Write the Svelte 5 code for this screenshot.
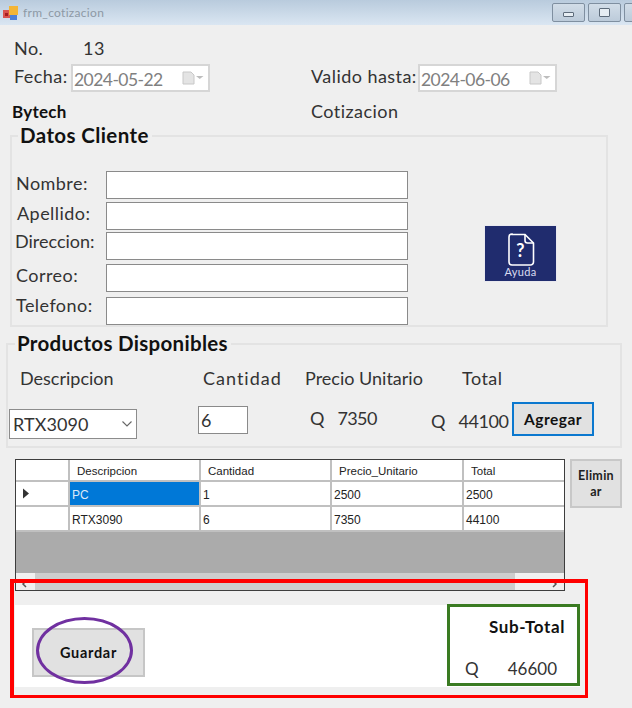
<script>
  const fields = ['Nombre:', 'Apellido:', 'Direccion:', 'Correo:', 'Telefono:'];
  const rows = [
    { desc: 'PC', qty: '1', price: '2500', total: '2500', current: true },
    { desc: 'RTX3090', qty: '6', price: '7350', total: '44100', current: false }
  ];
</script>

{#snippet datebox(value)}
  <div class="date">
    <span>{value}</span>
    <svg width="22" height="14" viewBox="0 0 22 14">
      <path d="M1 1h8l3 3v9H1z" fill="#e4e4e4" stroke="#c8c8c8"/>
      <path d="M14 5h7.500l-3.750 3z" fill="#bdbdbd"/>
    </svg>
  </div>
{/snippet}

<div class="form">
  <header class="title">
    <svg class="appicon" width="16" height="16" viewBox="0 0 16 16">
      <rect x="0" y="5" width="7" height="8" fill="#d9534f"/>
      <rect x="2" y="8" width="3" height="3" fill="#a51f1f"/>
      <rect x="6" y="1" width="9" height="9" fill="#f4b536"/>
      <rect x="7" y="10" width="7" height="5" fill="#4f7fd6"/>
    </svg>
    <span class="caption">frm_cotizacion</span>
    <div class="winbtns">
      <div class="winbtn"><i class="min"></i></div>
      <div class="winbtn"><i class="max"></i></div>
      <div class="winbtn cut"></div>
    </div>
  </header>

  <section class="meta">
    <span>No.</span><span class="num">13</span><span></span><span></span>
    <span class="lift">Fecha:</span>{@render datebox('2024-05-22')}<span class="valido lift">Valido hasta:</span>{@render datebox('2024-06-06')}
    <b class="bytech">Bytech</b><span></span><span class="coti">Cotizacion</span><span></span>
  </section>

  <section class="group cliente">
    <h2>Datos Cliente</h2>
    <div class="fields">
      {#each fields as f}
        <div class="field"><label for={f}>{f}</label><input id={f} /></div>
      {/each}
    </div>
    <button class="ayuda">
      <svg width="28" height="34" viewBox="0 0 28 34" fill="none" stroke="#fff" stroke-width="1.6">
        <path d="M5 1.5h13l8.500 8.500v19a3 3 0 0 1-3 3H5a3 3 0 0 1-3-3v-25a3 3 0 0 1 3-3z"/>
        <path d="M18 1.500v6a2.500 2.500 0 0 0 2.500 2.500h6"/>
      </svg>
      <span class="q">?</span>
      <span class="ay">Ayuda</span>
    </button>
  </section>

  <section class="group productos">
    <h2>Productos Disponibles</h2>
    <div class="heads">
      <span class="h1">Descripcion</span><span class="h2c">Cantidad</span><span class="h3">Precio Unitario</span><span>Total</span>
    </div>
    <div class="entry">
      <div class="combo"><span>RTX3090</span>
        <svg width="12" height="8" viewBox="0 0 12 8" fill="none" stroke="#666" stroke-width="1.1"><path d="M1.500 1.500 6 6l4.500-4.500"/></svg>
      </div>
      <div class="qty">6</div>
      <div class="money price"><span>Q</span><span>7350</span></div>
      <div class="money amount"><span>Q</span><span>44100</span></div>
      <button class="agregar">Agregar</button>
    </div>
  </section>

  <section class="gridrow">
    <div class="table">
      <div class="tr head">
        <div class="rh"></div><div class="td">Descripcion</div><div class="td">Cantidad</div><div class="td">Precio_Unitario</div><div class="td">Total</div>
      </div>
      {#each rows as r}
        <div class="tr">
          <div class="rh">{#if r.current}<svg width="8" height="11" viewBox="0 0 8 11"><path d="M1 0.500 7 5.500 1 10.500z" fill="#333"/></svg>{/if}</div>
          <div class="td" class:sel={r.current}>{r.desc}</div>
          <div class="td">{r.qty}</div><div class="td">{r.price}</div><div class="td">{r.total}</div>
        </div>
      {/each}
      <div class="empty"></div>
      <div class="scroll">
        <svg width="19" height="17" viewBox="0 0 19 17" fill="none" stroke="#555" stroke-width="1.500"><path d="M10 8 7 11l3 3"/></svg>
        <div class="track"><div class="thumb"></div></div>
        <svg width="19" height="17" viewBox="0 0 19 17" fill="none" stroke="#555" stroke-width="1.500"><path d="M8 8l3 3-3 3"/></svg>
      </div>
    </div>
    <button class="eliminar">Elimin<br />ar</button>
  </section>

  <section class="bottom">
    <button class="guardar">Guardar</button>
    <div class="sub">
      <b>Sub-Total</b>
      <div class="subval"><span>Q</span><span>46600</span></div>
    </div>
  </section>

  <div class="mark red"></div>
  <div class="mark green"></div>
  <div class="mark purple"></div>
</div>

<style>
  :global(body) { margin: 0; }
  .form {
    position: relative; width: 632px; height: 708px; overflow: hidden;
    background: #efefef; color: #333;
    font-family: "Lato", "Open Sans", sans-serif; font-size: 18px; letter-spacing: 0.45px;
  }
  button { font-family: inherit; padding: 0; }
  .title {
    height: 25px; display: flex; align-items: center; padding-left: 3px; box-sizing: border-box;
    background: linear-gradient(#b9cbdd, #dae6f2);
  }
  .appicon { flex: none; }
  .caption { margin-left: 4px; font-size: 12px; color: #8d99a5; letter-spacing: 0.3px; }
  .winbtns { margin-left: auto; display: flex; gap: 3px; align-self: flex-start; padding-top: 3px; margin-right: -6px; }
  .winbtn {
    width: 33px; height: 19px; box-sizing: border-box; border: 1px solid #7f8fa0; border-radius: 2px;
    background: linear-gradient(#d2dde8, #bccbda); display: flex; align-items: center; justify-content: center;
  }
  .winbtn.cut { width: 14px; }
  .winbtn i { display: block; border: 1px solid #5d6b7a; background: #e6edf3; box-sizing: border-box; }
  .min { width: 11px; height: 5px; margin-top: 3px; border-radius: 1px; }
  .max { width: 11px; height: 9px; border-radius: 1px; }

  .meta {
    display: grid; grid-template-columns: 57px 240px 107px 140px; grid-template-rows: 24px 28px 30px;
    row-gap: 4px; align-items: center; padding: 11px 0 0 14px; height: 98px; box-sizing: border-box;
    margin-bottom: 12px;
  }
  .num { margin-left: 12px; }
  .lift { margin-top: -4px; }
  .valido { white-space: nowrap; }
  .bytech { font-size: 17px; margin-left: -2px; color: #111; letter-spacing: 0.25px; }
  .coti { white-space: nowrap; }
  .date {
    width: 139px; height: 28px; box-sizing: border-box; border: 2px solid #d6d6d6; background: #fff; color: #808080;
    font-size: 17.500px; letter-spacing: -0.55px;
    display: flex; align-items: center; padding: 2px 4px 0 1px;
  }
  .date svg { margin-left: auto; margin-top: -2px; }

  .group { position: relative; box-sizing: border-box; border: 2px solid #e3e3e3; }
  .group h2 {
    position: absolute; margin: 0; background: #efefef; padding: 0 3px 0 2px; line-height: 24px;
    font-size: 20.500px; font-weight: 700; color: #111; white-space: nowrap; letter-spacing: 0.4px;
  }
  .cliente {
    margin-left: 10px; width: 598px; height: 192px; padding: 34px 0 0 4px;
    display: flex;
  }
  .cliente h2 { left: 6px; top: -14px; }
  .fields { display: flex; flex-direction: column; }
  .field { display: flex; align-items: center; height: 28px; }
  .field:nth-child(2) { margin-top: 3px; }
  .field:nth-child(3) { margin-top: 2px; }
  .field:nth-child(4) { margin-top: 4px; }
  .field:nth-child(5) { margin-top: 5px; }
  .field label { width: 90px; flex: none; }
  .field:nth-child(1) label { transform: translateY(-2px); }
  .field:nth-child(2) label { transform: translate(1px, -3px); }
  .field:nth-child(3) label { transform: translate(-1px, -5px); letter-spacing: 0; }
  .field:nth-child(4) label { transform: translateY(-3px); }
  .field:nth-child(5) label { transform: translateY(-6px); }
  .field input {
    width: 302px; height: 28px; box-sizing: border-box; border: 1px solid #8a8a8a; background: #fff; padding: 0; outline: 0;
  }
  .ayuda {
    position: relative; align-self: flex-start; margin: 54px 0 0 76px; width: 73px; height: 57px;
    border: 1px solid #e9e9ef; background: #202c6e; color: #fff; display: flex; flex-direction: column; align-items: center;
    padding-top: 7px; box-sizing: border-box;
  }
  .q { position: absolute; top: 14px; left: 0; right: 0; text-align: center; font-size: 18px; font-weight: 700; color: #fff; letter-spacing: 0; line-height: 20px; }
  .ay { position: absolute; bottom: 3px; left: 0; right: 0; text-align: center; font-size: 11px; color: #d9dcf0; line-height: 12px; letter-spacing: 0.3px; }

  .productos { margin: 16px 0 0 6px; width: 616px; height: 105px; padding: 21px 0 0 0; }
  .productos h2 { left: 7px; top: -14px; letter-spacing: 0.3px; }
  .heads { display: grid; grid-template-columns: 183px 102px 157px auto; padding-left: 12px; height: 24px; line-height: 24px; white-space: nowrap; }
  .h1, .h3 { letter-spacing: 0; }
  .h2c { letter-spacing: 1px; }
  .entry { position: relative; height: 40px; margin-top: 13px; display: flex; align-items: flex-start; }
  .combo {
    margin: 6px 0 0 1px; width: 128px; height: 30px; box-sizing: border-box; border: 1px solid #8c8c8c; background: #fff;
    display: flex; align-items: center; justify-content: space-between; padding: 0 3px 0 3px; letter-spacing: 0.1px;
  }
  .qty {
    margin: 3px 0 0 61px; width: 50px; height: 28px; box-sizing: border-box; border: 1px solid #8a8a8a; background: #fff;
    display: flex; align-items: center; padding-left: 2px;
  }
  .money { display: flex; white-space: nowrap; letter-spacing: -0.3px; }
  .price { margin: 4px 0 0 62px; width: 121px; gap: 13px; letter-spacing: -0.6px; }
  .amount { margin: 7px 0 0 0; width: 81px; gap: 13px; letter-spacing: -0.4px; }
  .money span:first-child { letter-spacing: 0; }
  .agregar {
    margin-top: -1px; width: 82px; height: 34px; box-sizing: border-box; border: 2px solid #0b78cf; background: #e1e1e1;
    font-weight: 700; font-size: 15.500px; color: #111; letter-spacing: 0.5px;
  }

  .gridrow { display: flex; align-items: flex-start; margin: 11px 0 0 15px; gap: 5px; }
  .table {
    width: 550px; height: 132px; box-sizing: border-box; border: 1px solid #3d3d3d; background: #ababab;
    display: flex; flex-direction: column; font-size: 12px; letter-spacing: 0; line-height: 1;
    font-family: "Liberation Sans", sans-serif;
  }
  .tr { display: grid; grid-template-columns: 54px 131px 131px 132px 100px; height: 25px; background: #fff; flex: none; border-bottom: 2px solid #c0c0c0; box-sizing: border-box; }
  .tr.head { height: 22px; font-size: 11.500px; }
  .rh { background: #fff; border-right: 2px solid #c0c0c0; display: flex; align-items: center; padding-left: 6px; box-sizing: border-box; }
  .td { border-right: 2px solid #c0c0c0; display: flex; align-items: center; padding: 2px 0 0 2px; box-sizing: border-box; white-space: nowrap; overflow: hidden; color: #222; }
  .head .td { padding: 3px 0 0 7px; }
  .td:last-child { border-right: 0; }
  .td.sel { background: #0078d7; color: #dbe9f7; }
  .empty { flex: 1; }
  .scroll { height: 17px; flex: none; background: #f0f0f0; display: flex; align-items: center; }
  .track { flex: 1; height: 100%; }
  .thumb { width: 480px; height: 100%; background: #cdcdcd; }

  .eliminar {
    width: 52px; height: 49px; margin-top: 0; box-sizing: border-box; border: 2px solid #c8c8c8; background: #e1e1e1;
    font-weight: 700; font-size: 12.500px; line-height: 16px; color: #222; letter-spacing: 0.3px;
  }

  .bottom {
    margin: 14px 0 0 15px; width: 565px; height: 82px; background: #fff; position: relative; display: flex;
    justify-content: space-between; align-items: flex-start;
  }
  .guardar {
    margin: 23px 0 0 17px; width: 113px; height: 49px; box-sizing: border-box; border: 2px solid #c6c6c6; background: #e1e1e1;
    font-weight: 700; font-size: 14.500px; color: #111; letter-spacing: 0.7px;
  }
  .sub { width: 133px; height: 82px; display: flex; flex-direction: column; box-sizing: border-box; padding: 11px 15px 0 18px; }
  .sub b { align-self: flex-end; font-size: 17px; color: #111; letter-spacing: 0.6px; line-height: 22px; }
  .subval { display: flex; justify-content: space-between; margin-top: 20px; padding-right: 8px; line-height: 22px; font-size: 17px; letter-spacing: 0; }

  .mark { position: absolute; box-sizing: border-box; pointer-events: none; }
  .red { left: 10px; top: 579px; width: 578px; height: 119px; border: 4px solid #ff0000; border-width: 4px 3px 3px 4px; }
  .green { left: 447px; top: 604px; width: 133px; height: 82px; border: 3px solid #3a7b22; }
  .purple { left: 36px; top: 617px; width: 97px; height: 67px; border: 3px solid #7030a0; border-radius: 50%; }
</style>
